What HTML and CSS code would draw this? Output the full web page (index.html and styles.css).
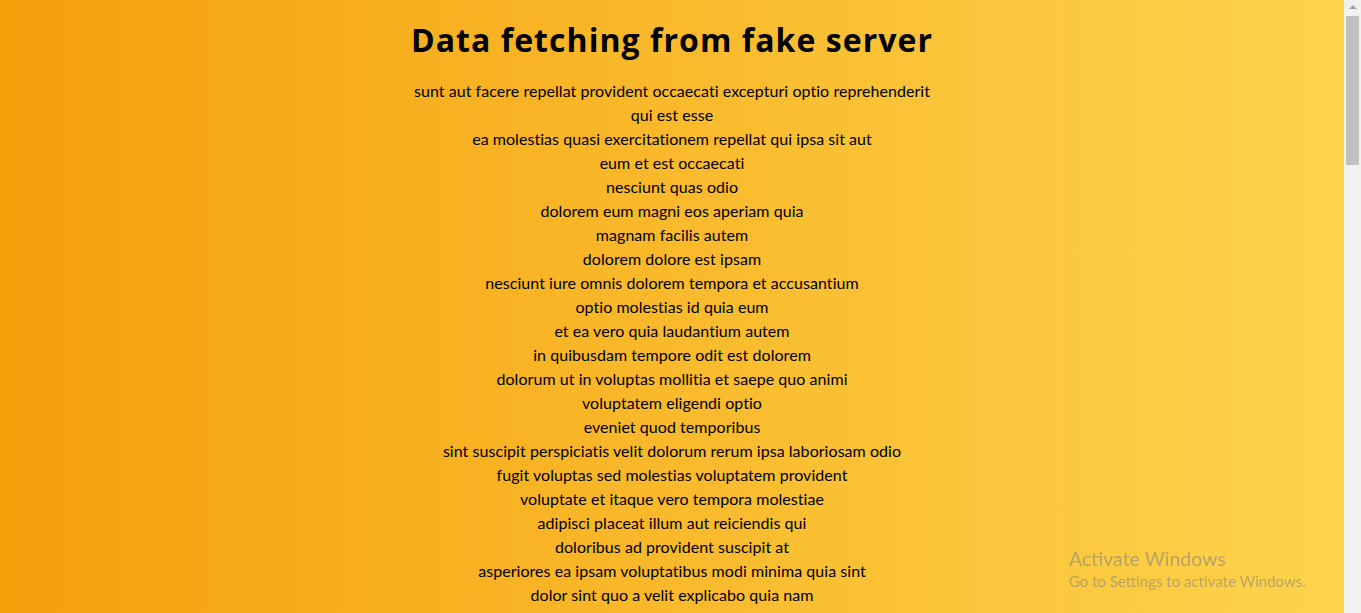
FILE: index.html
```html
<!DOCTYPE html>
<html lang="en">
<head>
<meta charset="utf-8">
<title>Data fetching from fake server</title>
<link rel="stylesheet" href="styles.css">
</head>
<body>
<main class="page">
  <h1 class="title">Data fetching from fake server</h1>
  <ul class="posts">
    <li>sunt aut facere repellat provident occaecati excepturi optio reprehenderit</li>
    <li>qui est esse</li>
    <li>ea molestias quasi exercitationem repellat qui ipsa sit aut</li>
    <li>eum et est occaecati</li>
    <li>nesciunt quas odio</li>
    <li>dolorem eum magni eos aperiam quia</li>
    <li>magnam facilis autem</li>
    <li>dolorem dolore est ipsam</li>
    <li>nesciunt iure omnis dolorem tempora et accusantium</li>
    <li>optio molestias id quia eum</li>
    <li>et ea vero quia laudantium autem</li>
    <li>in quibusdam tempore odit est dolorem</li>
    <li>dolorum ut in voluptas mollitia et saepe quo animi</li>
    <li>voluptatem eligendi optio</li>
    <li>eveniet quod temporibus</li>
    <li>sint suscipit perspiciatis velit dolorum rerum ipsa laboriosam odio</li>
    <li>fugit voluptas sed molestias voluptatem provident</li>
    <li>voluptate et itaque vero tempora molestiae</li>
    <li>adipisci placeat illum aut reiciendis qui</li>
    <li>doloribus ad provident suscipit at</li>
    <li>asperiores ea ipsam voluptatibus modi minima quia sint</li>
    <li>dolor sint quo a velit explicabo quia nam</li>
    <li>maxime id vitae nihil numquam</li>
    <li>autem hic labore sunt dolores incidunt</li>
    <li>rem alias distinctio quo quis</li>
    <li>est et quae odit qui non</li>
    <li>quasi id et eos tenetur aut quo autem</li>
    <li>delectus ullam et corporis nulla voluptas sequi</li>
    <li>iusto eius quod necessitatibus culpa ea</li>
    <li>a quo magni similique perferendis</li>
    <li>ullam ut quidem id aut vel consequuntur</li>
    <li>doloremque illum aliquid sunt</li>
    <li>qui explicabo molestiae dolorem</li>
    <li>magnam ut rerum iure</li>
    <li>id nihil consequatur molestias animi provident</li>
    <li>fuga nam accusamus voluptas reiciendis itaque</li>
    <li>provident vel ut sit ratione est</li>
    <li>explicabo et eos deleniti nostrum ab id repellendus</li>
    <li>eos dolorem iste accusantium est eaque quam</li>
    <li>enim quo cumque</li>
    <li>non est facere</li>
    <li>commodi ullam sint et excepturi error explicabo praesentium voluptas</li>
    <li>eligendi iste nostrum consequuntur adipisci praesentium sit beatae perferendis</li>
    <li>optio dolor molestias sit</li>
    <li>ut numquam possimus omnis eius suscipit laudantium iure</li>
    <li>aut quo modi neque nostrum ducimus</li>
    <li>quibusdam cumque rem aut deserunt</li>
    <li>ut voluptatem illum ea doloribus itaque eos</li>
    <li>laborum non sunt aut ut assumenda perspiciatis voluptas</li>
    <li>repellendus qui recusandae incidunt voluptates tenetur qui omnis exercitationem</li>
    <li>soluta aliquam aperiam consequatur illo quis voluptas</li>
    <li>qui enim et consequuntur quia animi quis voluptate quibusdam</li>
    <li>ut quo aut ducimus alias</li>
    <li>sit asperiores ipsam eveniet odio non quia</li>
    <li>sit vel voluptatem et non libero</li>
    <li>qui et at rerum necessitatibus</li>
    <li>sed ab est est</li>
    <li>voluptatum itaque dolores nisi et quasi</li>
    <li>qui commodi dolor at maiores et quis id accusantium</li>
    <li>consequatur placeat omnis quisquam quia reprehenderit fugit veritatis facere</li>
    <li>voluptatem doloribus consectetur est ut ducimus</li>
    <li>beatae enim quia vel</li>
    <li>voluptas blanditiis repellendus animi ducimus error sapiente et suscipit</li>
    <li>et fugit quas eum in in aperiam quod</li>
    <li>consequatur id enim sunt et et</li>
    <li>repudiandae ea animi iusto</li>
    <li>aliquid eos sed fuga est maxime repellendus</li>
    <li>odio quis facere architecto reiciendis optio</li>
    <li>fugiat quod pariatur odit minima</li>
    <li>voluptatem laborum magni</li>
    <li>et iusto veniam et illum aut fuga</li>
    <li>sint hic doloribus consequatur eos non id</li>
    <li>consequuntur deleniti eos quia temporibus ab aliquid at</li>
    <li>enim unde ratione doloribus quas enim ut sit sapiente</li>
    <li>dignissimos eum dolor ut enim et delectus in</li>
    <li>doloremque officiis ad et non perferendis</li>
    <li>necessitatibus quasi exercitationem odio</li>
    <li>quam voluptatibus rerum veritatis</li>
    <li>pariatur consequatur quia magnam autem omnis non amet</li>
    <li>labore in ex et explicabo corporis aut quas</li>
    <li>tempora rem veritatis voluptas quo dolores vero</li>
    <li>laudantium voluptate suscipit sunt enim enim</li>
    <li>odit et voluptates doloribus alias odio et</li>
    <li>optio ipsam molestias necessitatibus occaecati facilis veritatis dolores aut</li>
    <li>dolore veritatis porro provident adipisci blanditiis et sunt</li>
    <li>placeat quia et porro iste</li>
    <li>nostrum quis quasi placeat</li>
    <li>sapiente omnis fugit eos</li>
    <li>sint soluta et vel magnam aut ut sed qui</li>
    <li>ad iusto omnis odit dolor voluptatibus</li>
    <li>aut amet sed</li>
    <li>ratione ex tenetur perferendis</li>
    <li>beatae soluta recusandae</li>
    <li>qui qui voluptates illo iste minima</li>
    <li>id minus libero illum nam ad officiis</li>
    <li>quaerat velit veniam amet cupiditate aut numquam ut sequi</li>
    <li>quas fugiat ut perspiciatis vero provident</li>
    <li>laboriosam dolor voluptates</li>
    <li>temporibus sit alias delectus eligendi possimus magni</li>
    <li>at nam consequatur ea labore ea harum</li>
  </ul>
</main>
<div class="scrollbar" aria-hidden="true">
  <div class="scrollbar-arrow"></div>
  <div class="scrollbar-thumb"></div>
</div>
<div class="watermark">
  <div class="watermark-title">Activate Windows</div>
  <div class="watermark-sub">Go to Settings to activate Windows.</div>
</div>
</body>
</html>
```

FILE: styles.css
```css
html {
  background: #f1f1f1;
  scrollbar-width: none;
}

html::-webkit-scrollbar {
  display: none;
}

body {
  margin: 0 17px 0 0;
  min-height: 100vh;
  background: linear-gradient(to right, #f59f0b, #fdd44c);
  font-family: Lato, "Liberation Sans", sans-serif;
  color: #000;
  text-align: center;
}

.page {
  padding: 20px 0 20px;
}

.title {
  margin: 0 0 19px;
  font-family: "Open Sans", Lato, sans-serif;
  font-size: 32px;
  line-height: 40px;
  font-weight: 700;
  letter-spacing: 1.05px;
}

.posts {
  list-style: none;
  margin: 0;
  padding: 0;
  font-size: 16px;
  line-height: 24px;
  letter-spacing: 0.05px;
}

.scrollbar {
  position: fixed;
  top: 0;
  right: 0;
  width: 17px;
  height: 100vh;
  background: #f1f1f1;
  display: flex;
  flex-direction: column;
  align-items: center;
}

.scrollbar-arrow {
  margin-top: 5px;
  width: 0;
  height: 0;
  border-left: 4px solid transparent;
  border-right: 4px solid transparent;
  border-bottom: 4px solid #a3a3a3;
}

.scrollbar-thumb {
  margin-top: 7px;
  width: 13px;
  height: 149px;
  background: #c1c1c1;
}

.watermark {
  position: fixed;
  left: 1069px;
  bottom: 22px;
  text-align: left;
  color: rgba(128, 128, 128, 0.55);
  font-family: Lato, "Liberation Sans", sans-serif;
  pointer-events: none;
}

.watermark-title {
  font-size: 19.5px;
  line-height: 24px;
}

.watermark-sub {
  font-size: 15px;
  line-height: 20px;
}
```
